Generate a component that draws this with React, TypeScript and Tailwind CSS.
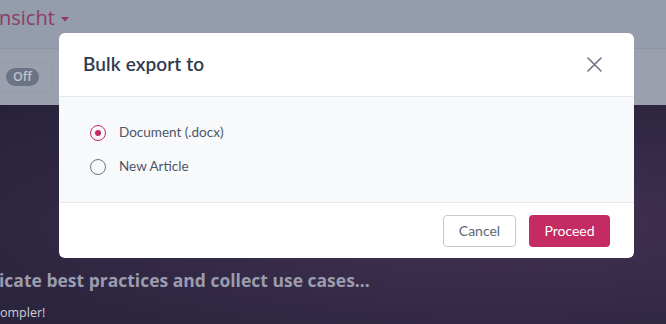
import { useState } from "react";

const options = [
  { id: "docx", label: "Document (.docx)" },
  { id: "article", label: "New Article" },
];

export default function App() {
  const [selected, setSelected] = useState("docx");

  return (
    <div className="relative w-[666px] h-[324px] overflow-hidden font-['Open_Sans',sans-serif]">
      {/* Dimmed page behind the dialog */}
      <div className="flex flex-col h-full">
        <div className="h-[48px] bg-[#959cab] flex items-center gap-[6px] pb-[12px]">
          <span className="text-[20px] text-[#8c3d68] leading-none -ml-[1px]">nsicht</span>
          <svg width="8" height="5" viewBox="0 0 8 5" className="mt-[2px]">
            <path d="M0 0h8L4 4.5z" fill="#8c3d68" />
          </svg>
        </div>
        <div className="h-[57px] bg-[#9aa0ae] border-t border-[#8e94a2] flex items-center">
          <div className="h-[31px] w-[54px] -ml-[1px] border border-[#939aa8] rounded-[3px] flex items-center pl-[6px]">
            <span className="h-[18px] px-[7px] rounded-full bg-[#6b7385] text-[#bfc4cd] text-[12.5px] font-semibold leading-[18px]">
              Off
            </span>
          </div>
        </div>
        <div className="flex-1 bg-[radial-gradient(ellipse_at_75%_55%,#43324f_0%,#352a48_45%,#27223a_100%)] pt-[164px]">
          <p className="text-[17.5px] font-bold text-[#9b9cad] leading-[22px] -ml-[1px]">
            icate best practices and collect use cases...
          </p>
          <p className="mt-[13px] text-[12.5px] text-[#cfcdd8] leading-[18px]">ompler!</p>
        </div>
      </div>

      {/* Dialog */}
      <div className="absolute left-[59px] top-[33px] w-[575px] bg-white rounded-[6px] overflow-hidden font-['Lato',sans-serif]">
        <div className="h-[64px] flex items-center justify-between pl-[24px] pr-[32px] border-b border-[#e5e8ee]">
          <h2 className="text-[19px] font-semibold text-[#2f3a4f] tracking-[0.1px]">Bulk export to</h2>
          <button className="text-[#6b7385]">
            <svg width="15" height="15" viewBox="0 0 15 15" fill="none">
              <path d="M1 1l13 13M14 1L1 14" stroke="currentColor" strokeWidth="1.6" strokeLinecap="round" />
            </svg>
          </button>
        </div>
        <div className="bg-[#f8f9fb] h-[106px] border-b border-[#e5e8ee] flex flex-col justify-center gap-[14px] pl-[31px]">
          {options.map((o) => (
            <button
              key={o.id}
              onClick={() => setSelected(o.id)}
              className="flex items-center gap-[13px] h-[20px]"
            >
              <span
                className={`w-[16px] h-[16px] rounded-full border-[1.5px] flex items-center justify-center ${
                  selected === o.id ? "border-[#c42b62]" : "border-[#6b7385]"
                }`}
              >
                {selected === o.id && <span className="w-[6px] h-[6px] rounded-full bg-[#c42b62]" />}
              </span>
              <span className="text-[13.5px] text-[#4d5567]">{o.label}</span>
            </button>
          ))}
        </div>
        <div className="h-[55px] flex items-center justify-end gap-[13px] pr-[24px]">
          <button className="h-[32px] w-[73px] rounded-[4px] border border-[#c4c9d2] text-[#5d6577] text-[14px]">
            Cancel
          </button>
          <button className="h-[32px] w-[81px] rounded-[4px] bg-[#c42b62] text-white text-[14px]">
            Proceed
          </button>
        </div>
      </div>
    </div>
  );
}
